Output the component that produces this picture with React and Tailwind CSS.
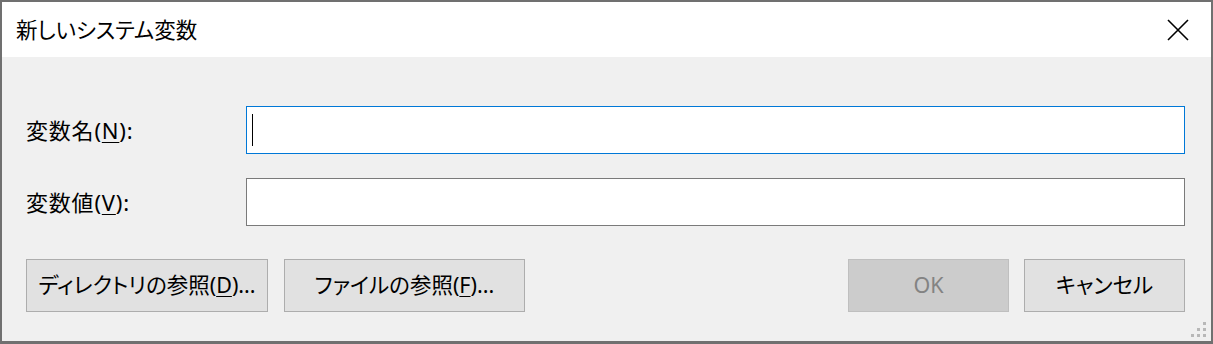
const FONT = "font-['Noto_Sans','Noto_Sans_CJK_JP',sans-serif] [font-feature-settings:'palt']";

function Mnemonic({ before, letter, after }) {
  return (
    <span>
      {before}
      <span className="underline underline-offset-[3px] decoration-1">{letter}</span>
      {after}
    </span>
  );
}

function Button({ children, disabled, className = '' }) {
  return (
    <button
      className={`h-[53px] border text-[21.5px] flex items-center justify-center ${
        disabled
          ? 'bg-[#cccccc] border-[#bfbfbf] text-[#838383]'
          : 'bg-[#e1e1e1] border-[#adadad] text-[#000]'
      } ${className}`}
    >
      {children}
    </button>
  );
}

function CloseIcon() {
  return (
    <svg width="22" height="22" viewBox="0 0 22 22" fill="none">
      <path d="M1 1L21 21M21 1L1 21" stroke="#000" strokeWidth="1.6" />
    </svg>
  );
}

export default function App() {
  return (
    <div className={`w-[1213px] h-[344px] bg-[#707070] pt-[2px] pl-[2px] pr-[2px] pb-[3px] ${FONT}`}>
      <div className="h-full flex flex-col">
        {/* Title bar */}
        <div className="h-[55px] bg-white flex items-center justify-between pl-[14px] pr-[22px]">
          <span className="text-[21.5px] text-[#000] pt-[2px]">新しいシステム変数</span>
          <CloseIcon />
        </div>

        {/* Body */}
        <div className="relative flex-1 bg-[#f0f0f0] pl-[24px] pr-[26px] pt-[49px]">
          <div className="flex items-center">
            <div className="w-[220px] text-[22px] tracking-[0.8px] text-[#000]">
              <Mnemonic before="変数名(" letter="N" after="):" />
            </div>
            <div className="flex-1 h-[48px] bg-white border border-[#0078d7] flex items-center pl-[5px]">
              <div className="w-px h-[32px] bg-black" />
            </div>
          </div>

          <div className="flex items-center mt-[24px]">
            <div className="w-[220px] text-[22px] tracking-[0.8px] text-[#000]">
              <Mnemonic before="変数値(" letter="V" after="):" />
            </div>
            <div className="flex-1 h-[48px] bg-white border border-[#7a7a7a]" />
          </div>

          <div className="flex items-center mt-[33px]">
            <div className="flex gap-[16px]">
              <Button className="w-[242px]">
                <Mnemonic before="ディレクトリの参照(" letter="D" after=")..." />
              </Button>
              <Button className="w-[241px]">
                <Mnemonic before="ファイルの参照(" letter="F" after=")..." />
              </Button>
            </div>
            <div className="ml-auto flex gap-[15px]">
              <Button disabled className="w-[161px]">OK</Button>
              <Button className="w-[161px]">キャンセル</Button>
            </div>
          </div>

          {/* Resize grip */}
          <div className="absolute right-[5px] bottom-[4px] grid grid-cols-3 gap-[3px]">
            <span className="w-[3px] h-[3px]" />
            <span className="w-[3px] h-[3px]" />
            <span className="w-[3px] h-[3px] bg-[#b8b8b8]" />
            <span className="w-[3px] h-[3px]" />
            <span className="w-[3px] h-[3px] bg-[#b8b8b8]" />
            <span className="w-[3px] h-[3px] bg-[#b8b8b8]" />
            <span className="w-[3px] h-[3px] bg-[#b8b8b8]" />
            <span className="w-[3px] h-[3px] bg-[#b8b8b8]" />
            <span className="w-[3px] h-[3px] bg-[#b8b8b8]" />
          </div>
        </div>
      </div>
    </div>
  );
}
